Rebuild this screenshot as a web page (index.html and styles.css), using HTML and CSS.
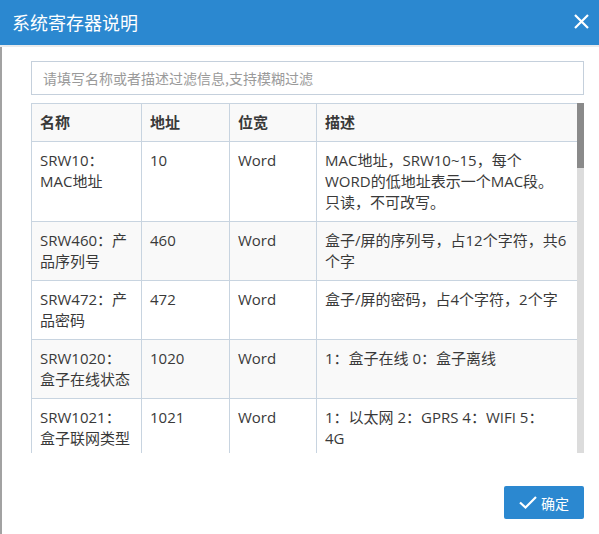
FILE: index.html
```html
<!DOCTYPE html>
<html lang="zh-CN">
<head>
<meta charset="utf-8">
<title>系统寄存器说明</title>
<link rel="stylesheet" href="styles.css">
</head>
<body>
<div class="modal">
  <div class="modal-header">
    <h3 class="modal-title">系统寄存器说明</h3>
    <button class="close" type="button" aria-label="关闭">
      <svg width="15" height="15" viewBox="0 0 15 15"><path d="M1 1L14 14M14 1L1 14" stroke="#fff" stroke-width="2.2" fill="none"/></svg>
    </button>
  </div>
  <div class="modal-body">
    <input class="search" type="text" placeholder="请填写名称或者描述过滤信息,支持模糊过滤">
    <div class="table-area">
      <div class="table-viewport">
        <table class="reg-table">
          <colgroup><col class="c1"><col class="c2"><col class="c3"><col class="c4"></colgroup>
          <thead>
            <tr><th>名称</th><th>地址</th><th>位宽</th><th>描述</th></tr>
          </thead>
          <tbody>
            <tr><td>SRW10：MAC地址</td><td>10</td><td>Word</td><td>MAC地址，SRW10~15，每个<br>WORD的低地址表示一个MAC段。<br>只读，不可改写。</td></tr>
            <tr><td>SRW460：产品序列号</td><td>460</td><td>Word</td><td>盒子/屏的序列号，占12个字符，共6个字</td></tr>
            <tr><td>SRW472：产品密码</td><td>472</td><td>Word</td><td>盒子/屏的密码，占4个字符，2个字</td></tr>
            <tr><td>SRW1020：盒子在线状态</td><td>1020</td><td>Word</td><td>1：盒子在线 0：盒子离线</td></tr>
            <tr><td>SRW1021：盒子联网类型</td><td>1021</td><td>Word</td><td>1：以太网 2：GPRS 4：WIFI 5：<br>4G</td></tr>
          </tbody>
        </table>
      </div>
      <div class="scrollbar"><div class="scroll-thumb"></div></div>
    </div>
    <div class="modal-footer">
      <button class="btn-ok" type="button">
        <svg width="18" height="13" viewBox="0 0 18 13"><path d="M1 6.5L6.5 11.5L17 1" stroke="#fff" stroke-width="2.2" fill="none"/></svg>
        <span>确定</span>
      </button>
    </div>
  </div>
</div>
</body>
</html>
```

FILE: styles.css
```css
* { box-sizing: border-box; }
html, body { margin: 0; padding: 0; background: #fff; }
body {
  font-family: "Open Sans", "Noto Sans CJK SC", sans-serif;
  color: #393939;
}
.modal { width: 599px; height: 534px; display: flex; flex-direction: column; }
.modal-header {
  height: 47px;
  flex: none;
  background: #2b88d0;
  border-bottom: 2px solid #e8eaec;
  display: flex;
  align-items: center;
  justify-content: space-between;
  padding: 0 10px 0 12px;
}
.modal-title {
  margin: 0;
  font-family: "Noto Sans CJK SC", sans-serif;
  font-weight: normal;
  font-size: 18px;
  color: #fff;
  line-height: 24px;
  margin-top: -1px;
}
.close {
  border: 0;
  background: none;
  padding: 0;
  width: 15px;
  height: 15px;
  display: flex;
  margin-top: -2px;
}
.modal-body {
  flex: 1;
  border-left: 2px solid #a2a2a2;
  padding: 14px 15px 0 29px;
  display: flex;
  flex-direction: column;
}
.search {
  height: 34px;
  width: 100%;
  border: 1px solid #c5d0dc;
  padding: 0 11px;
  font-family: "Noto Sans CJK SC", sans-serif;
  font-size: 14px;
  color: #555;
  outline: none;
  margin: 0 0 8px;
}
.search::placeholder { color: #9a9a9a; }
.table-area {
  height: 350px;
  flex: none;
  display: flex;
}
.table-viewport {
  flex: 1;
  overflow: hidden;
}
.scrollbar {
  width: 7px;
  flex: none;
  background: #dcdcdc;
}
.scroll-thumb {
  height: 65px;
  background: #8a8a8a;
}
.reg-table {
  width: 546px;
  border-collapse: collapse;
  table-layout: fixed;
  font-size: 15px;
  line-height: 21px;
}
.c1 { width: 110px; }
.c2 { width: 88px; }
.c3 { width: 87px; }
.c4 { width: 261px; }
.reg-table th, .reg-table td {
  border: 1px solid #c8d4e0;
  padding: 8px;
  text-align: left;
  vertical-align: top;
}
.reg-table th { font-weight: bold; background: #f9f9f9; }
.reg-table tbody tr:nth-child(even) td { background: #f9f9f9; }
.modal-footer {
  display: flex;
  justify-content: flex-end;
  padding-top: 33px;
}
.btn-ok {
  width: 80px;
  height: 33px;
  border: 0;
  border-radius: 2px;
  background: #2b88d0;
  color: #fff;
  font-family: "Noto Sans CJK SC", sans-serif;
  font-size: 14px;
  display: flex;
  align-items: center;
  padding: 0 0 0 15px;
  gap: 4px;
}
```
